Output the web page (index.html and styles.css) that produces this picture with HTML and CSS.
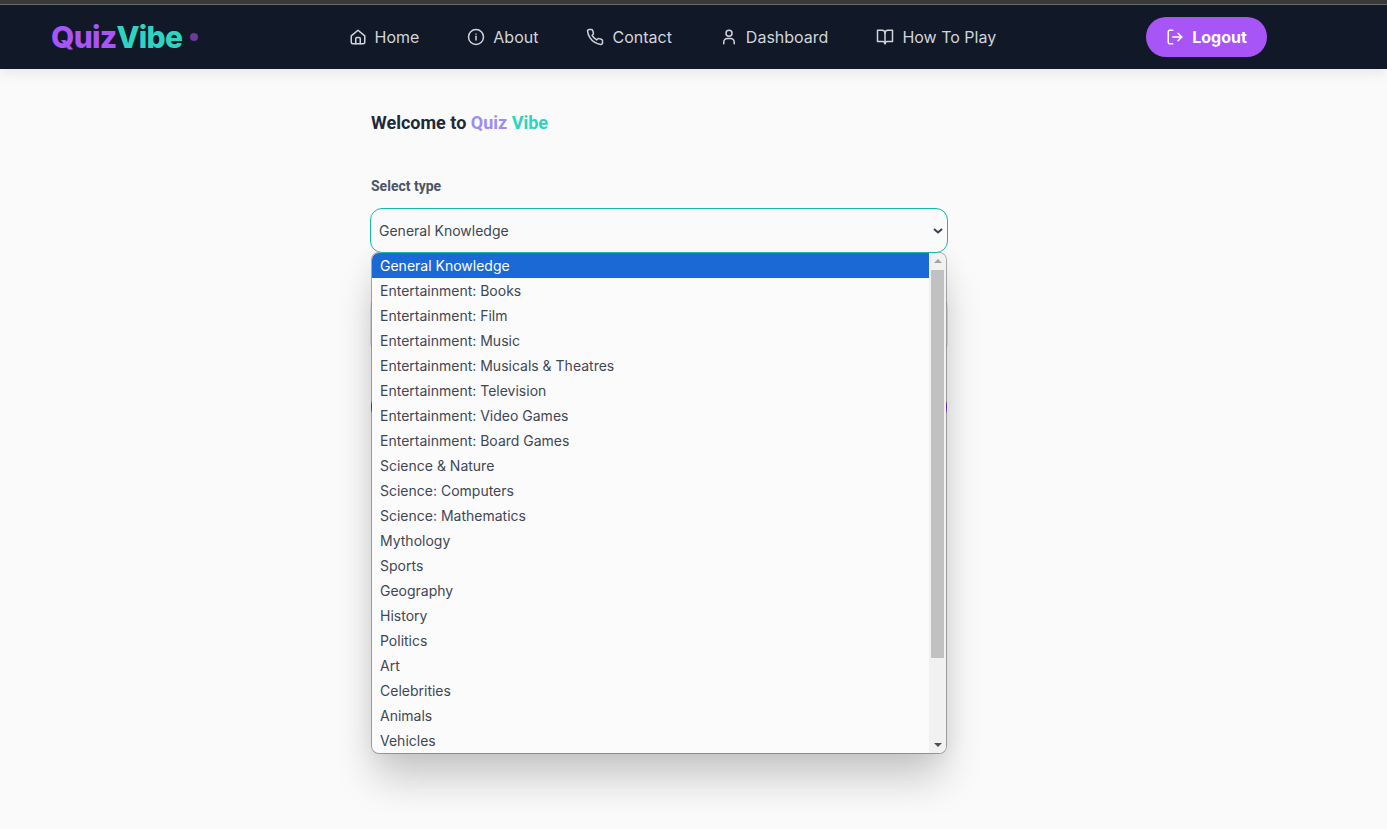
FILE: index.html
```html
<!DOCTYPE html>
<html lang="en">
<head>
  <meta charset="UTF-8">
  <title>QuizVibe</title>
  <link rel="stylesheet" href="styles.css">
</head>
<body>
  <div class="top-strip"></div>
  <header class="navbar">
    <a class="logo"><span class="purple">Quiz</span><span class="teal">Vibe</span><i class="logo-dot"></i></a>
    <nav class="nav-links">
      <a>
        <svg viewBox="0 0 24 24"><path d="M3 10.500 12 3l9 7.500V19a2 2 0 0 1-2 2H5a2 2 0 0 1-2-2z"/><path d="M9 21v-7a1.500 1.500 0 0 1 1.500-1.500h3A1.500 1.500 0 0 1 15 14v7"/></svg>
        Home
      </a>
      <a>
        <svg viewBox="0 0 24 24"><circle cx="12" cy="12" r="10"/><path d="M12 16v-5"/><path d="M12 8h.01"/></svg>
        About
      </a>
      <a>
        <svg viewBox="0 0 24 24"><path d="M22 16.900v3a2 2 0 0 1-2.200 2 19.800 19.800 0 0 1-8.600-3.100 19.500 19.500 0 0 1-6-6A19.800 19.800 0 0 1 2.100 4.200 2 2 0 0 1 4.100 2h3a2 2 0 0 1 2 1.700c.1 1 .4 1.900.7 2.800a2 2 0 0 1-.5 2.100L8.100 9.900a16 16 0 0 0 6 6l1.300-1.300a2 2 0 0 1 2.100-.4c.9.3 1.800.6 2.800.7a2 2 0 0 1 1.700 2z"/></svg>
        Contact
      </a>
      <a>
        <svg viewBox="0 0 24 24"><circle cx="12" cy="7" r="4"/><path d="M5 21v-2a5 5 0 0 1 5-5h4a5 5 0 0 1 5 5v2"/></svg>
        Dashboard
      </a>
      <a>
        <svg viewBox="0 0 24 24"><path d="M12 7a4 4 0 0 0-4-4H2v15h7a3 3 0 0 1 3 3 3 3 0 0 1 3-3h7V3h-6a4 4 0 0 0-4 4z"/><path d="M12 7v14"/></svg>
        How To Play
      </a>
    </nav>
    <button class="logout">
      <svg viewBox="0 0 24 24"><path d="M9 21H5a2 2 0 0 1-2-2V5a2 2 0 0 1 2-2h4"/><path d="M16 17l5-5-5-5"/><path d="M21 12H9"/></svg>
      Logout
    </button>
  </header>

  <main class="content">
    <h1 class="welcome">Welcome to <span class="violet">Quiz</span> <span class="mint">Vibe</span></h1>
    <form class="quiz-form">
      <label class="field-label">Select type</label>
      <div class="select-wrap">
        <div class="select-box">
          General Knowledge
          <svg class="chevron" viewBox="0 0 10 6"><path d="M1 1l4 3.500L9 1"/></svg>
        </div>
        <!-- covered by the open list, only their edges show -->
        <div class="behind-input"></div>
        <div class="behind-button"></div>
        <div class="dropdown">
          <ul class="options">
            <li class="selected">General Knowledge</li>
            <li>Entertainment: Books</li>
            <li>Entertainment: Film</li>
            <li>Entertainment: Music</li>
            <li>Entertainment: Musicals &amp; Theatres</li>
            <li>Entertainment: Television</li>
            <li>Entertainment: Video Games</li>
            <li>Entertainment: Board Games</li>
            <li>Science &amp; Nature</li>
            <li>Science: Computers</li>
            <li>Science: Mathematics</li>
            <li>Mythology</li>
            <li>Sports</li>
            <li>Geography</li>
            <li>History</li>
            <li>Politics</li>
            <li>Art</li>
            <li>Celebrities</li>
            <li>Animals</li>
            <li>Vehicles</li>
          </ul>
          <div class="scrollbar">
            <span class="arrow-up"></span>
            <span class="thumb"></span>
            <span class="arrow-down"></span>
          </div>
        </div>
      </div>
    </form>
  </main>
</body>
</html>
```

FILE: styles.css
```css
* {
  box-sizing: border-box;
}
html, body {
  height: 100%;
}
body {
  margin: 0;
  background-color: #fafafa;
  color: #1f2937;
  font-family: Inter, 'Noto Sans', sans-serif;
  overflow: hidden;
}
.top-strip {
  height: 5px;
  background-color: #3a3a3a;
  border-bottom: 1px solid #6b6b68;
}
.navbar {
  height: 64px;
  padding: 0 120px 0 51px;
  display: flex;
  align-items: center;
  background-color: #111827;
  box-shadow: 0 4px 12px rgba(0, 0, 0, 0.08);
  position: relative;
}
.logo {
  width: 297.5px;
  display: flex;
  align-items: center;
  font-size: 30px;
  font-weight: 800;
  letter-spacing: -0.75px;
}
.purple {
  color: #a855f7;
}
.teal {
  color: #2dd4bf;
}
.logo-dot {
  width: 8px;
  height: 8px;
  margin-left: 8px;
  border-radius: 50%;
  background-color: #6b3a9c;
}
.nav-links {
  display: flex;
  gap: 48px;
}
.nav-links a {
  display: flex;
  align-items: center;
  gap: 8px;
  color: #d1d5db;
  font-size: 16px;
  font-weight: 400;
}
.nav-links svg {
  width: 18px;
  height: 18px;
  fill: none;
  stroke: currentColor;
  stroke-width: 2;
  stroke-linecap: round;
  stroke-linejoin: round;
}
.logout svg {
  width: 18px;
  height: 18px;
  fill: none;
  stroke: currentColor;
  stroke-width: 2;
  stroke-linecap: round;
  stroke-linejoin: round;
}
.logout {
  margin-left: auto;
  width: 121px;
  height: 40px;
  display: flex;
  align-items: center;
  justify-content: center;
  gap: 8px;
  border: none;
  border-radius: 20px;
  background-color: #a855f7;
  color: #fff;
  font-family: inherit;
  font-size: 16px;
  font-weight: 700;
}
.content {
  width: 576px;
  margin-left: 371px;
  padding-top: 42px;
}
.welcome {
  margin: 0;
  font-size: 18px;
  line-height: 24px;
  font-weight: 700;
  font-family: Roboto, Inter, sans-serif;
}
.violet {
  color: #9d8df1;
}
.mint {
  color: #2dd4bf;
}
.quiz-form {
  margin-top: 41px;
}
.field-label {
  display: block;
  color: #4b5563;
  font-family: Roboto, Inter, sans-serif;
  font-size: 14px;
  font-weight: 700;
  line-height: 20px;
}
.select-wrap {
  position: relative;
  margin-top: 12px;
}
.select-box {
  position: relative;
  z-index: 1;
  height: 45px;
  margin: 0 -1px;
  padding: 0 8px;
  display: flex;
  align-items: center;
  justify-content: space-between;
  border: 1px solid #14b8a6;
  border-radius: 12px;
  color: #3f4756;
  font-size: 14px;
  background-color: #fafafa;
}
.chevron {
  width: 10px;
  height: 6px;
  margin-right: -4px;
  fill: none;
  stroke: #374151;
  stroke-width: 2;
}
.behind-input {
  position: absolute;
  top: 88px;
  left: -1px;
  right: -1px;
  height: 58px;
  border: 1px solid #d9dbe0;
  border-radius: 12px;
}
.behind-button {
  position: absolute;
  top: 177px;
  left: 0;
  right: 0;
  height: 44px;
  border-radius: 22px;
  background-color: #9333ea;
}
.dropdown {
  position: absolute;
  top: 44px;
  left: 0;
  width: 576px;
  height: 502px;
  display: flex;
  overflow: hidden;
  border: 1px solid rgba(0, 0, 0, 0.3);
  border-radius: 8px;
  background-color: #fbfbfb;
  background-clip: padding-box;
  box-shadow: 0 28px 40px -4px rgba(0, 0, 0, 0.2), 0 0 24px rgba(0, 0, 0, 0.06);
}
.options {
  flex: 1;
  margin: 0;
  padding: 0;
  list-style: none;
  color: #3f4756;
  font-size: 14px;
  line-height: 25px;
  overflow: hidden;
}
.options li {
  padding-left: 8px;
}
.options .selected {
  background-color: #1a69d4;
  color: #fff;
}
.scrollbar {
  width: 17px;
  display: flex;
  flex-direction: column;
  align-items: center;
  background-color: #f1f1f1;
}
.arrow-up, .arrow-down {
  width: 0;
  height: 0;
  margin: 6px 0;
  border-left: 4px solid transparent;
  border-right: 4px solid transparent;
}
.arrow-up {
  border-bottom: 4px solid #a3a3a3;
}
.arrow-down {
  margin-top: auto;
  border-top: 4px solid #505050;
}
.thumb {
  width: 13px;
  height: 388px;
  margin-top: 1px;
  background-color: #c1c1c1;
}
```
